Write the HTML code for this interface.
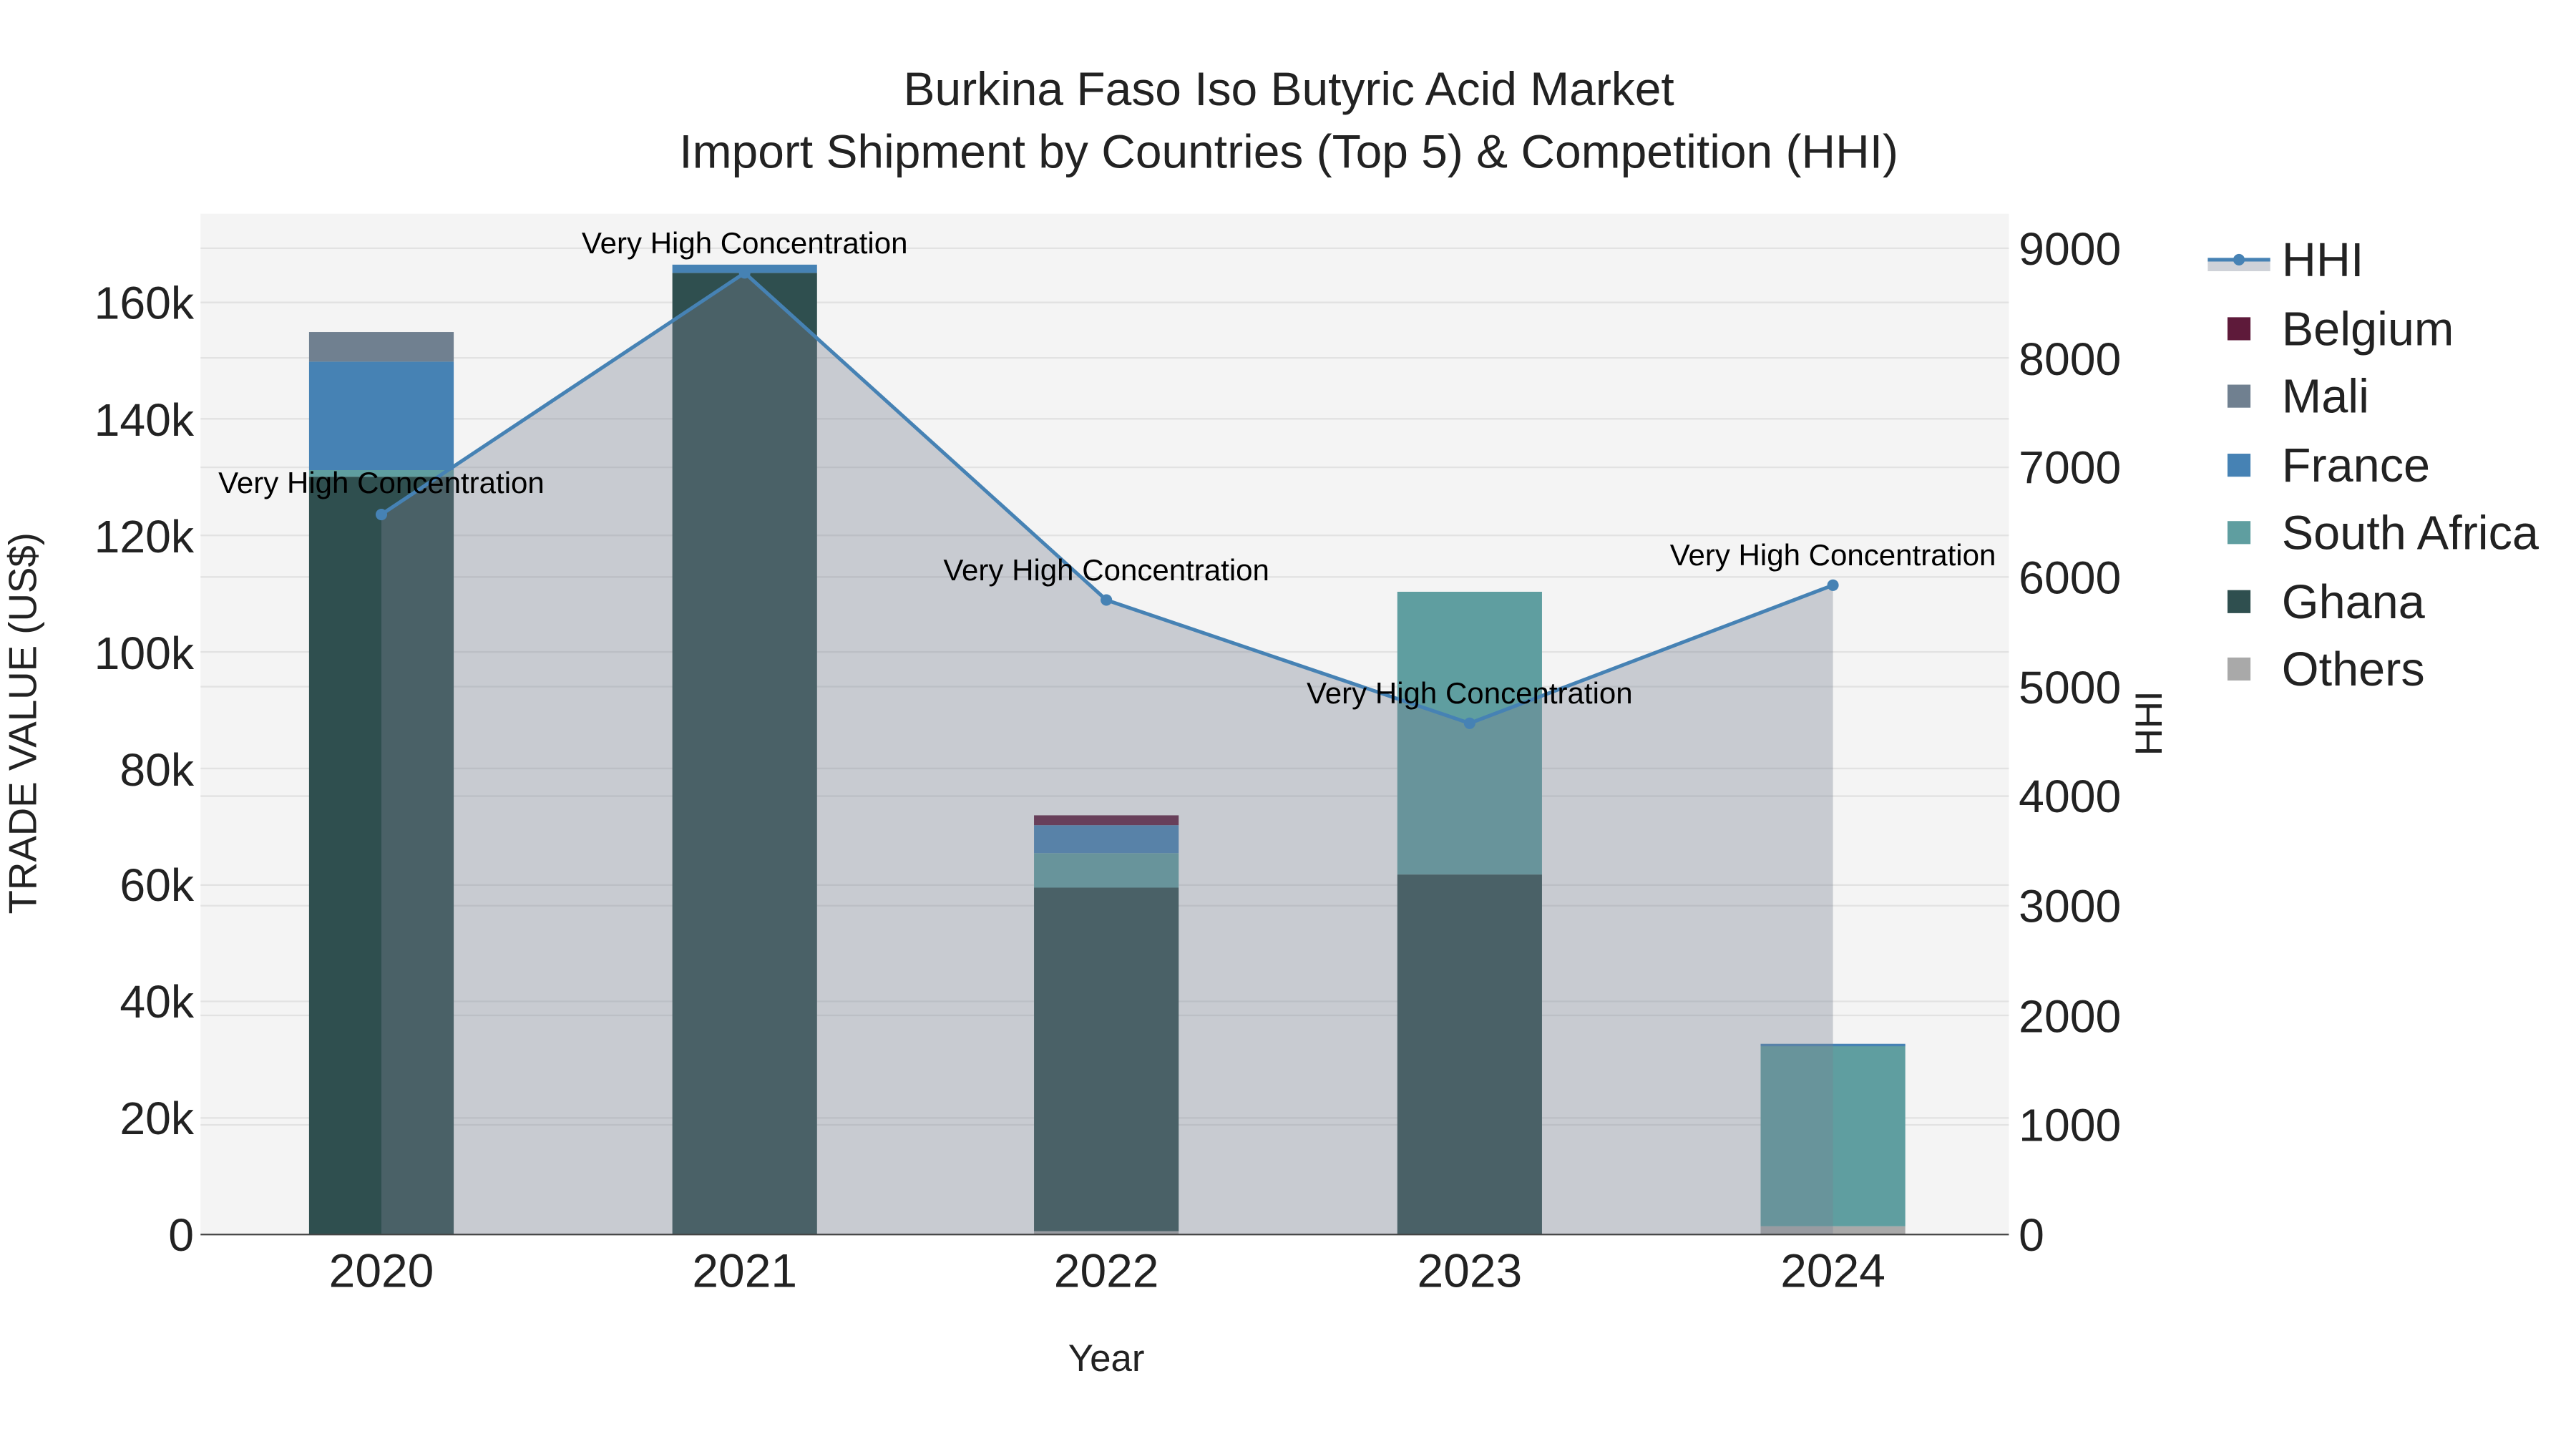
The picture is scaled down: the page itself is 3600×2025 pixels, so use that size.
<!DOCTYPE html>
<html><head><meta charset="utf-8"><style>html,body{margin:0;padding:0;background:#fff}svg{display:block}text{font-family:"Liberation Sans",Arial,sans-serif}</style></head>
<body>
<svg width="3600" height="2025" viewBox="0 0 1567 881.5" preserveAspectRatio="none" xmlns="http://www.w3.org/2000/svg">
<rect x="0" y="0" width="1567" height="882" fill="#fff"/>
<rect x="122" y="130" width="1100" height="621" fill="#f4f4f4"/>
<g stroke="#e2e2e2" stroke-width="1">
<line x1="122" x2="1222" y1="684.3" y2="684.3"/><line x1="122" x2="1222" y1="617.7" y2="617.7"/><line x1="122" x2="1222" y1="551" y2="551"/><line x1="122" x2="1222" y1="484.3" y2="484.3"/><line x1="122" x2="1222" y1="417.7" y2="417.7"/><line x1="122" x2="1222" y1="351" y2="351"/><line x1="122" x2="1222" y1="284.3" y2="284.3"/><line x1="122" x2="1222" y1="217.7" y2="217.7"/><line x1="122" x2="1222" y1="151" y2="151"/>
<line x1="122" x2="1222" y1="680.1" y2="680.1"/><line x1="122" x2="1222" y1="609.2" y2="609.2"/><line x1="122" x2="1222" y1="538.4" y2="538.4"/><line x1="122" x2="1222" y1="467.5" y2="467.5"/><line x1="122" x2="1222" y1="396.6" y2="396.6"/><line x1="122" x2="1222" y1="325.7" y2="325.7"/><line x1="122" x2="1222" y1="254.8" y2="254.8"/><line x1="122" x2="1222" y1="184" y2="184"/>
</g>
<rect x="188" y="290" width="88" height="461" fill="#2f4f4f"/>
<rect x="188" y="286" width="88" height="4" fill="#5f9ea0"/>
<rect x="188" y="220" width="88" height="66" fill="#4682b4"/>
<rect x="188" y="202" width="88" height="18" fill="#708090"/>
<rect x="409" y="166" width="88" height="585" fill="#2f4f4f"/>
<rect x="409" y="161" width="88" height="5" fill="#4682b4"/>
<rect x="629" y="749" width="88" height="2" fill="#a9a9a9"/>
<rect x="629" y="540" width="88" height="209" fill="#2f4f4f"/>
<rect x="629" y="519" width="88" height="21" fill="#5f9ea0"/>
<rect x="629" y="502" width="88" height="17" fill="#4682b4"/>
<rect x="629" y="496" width="88" height="6" fill="#5e1a3a"/>
<rect x="850" y="532" width="88" height="219" fill="#2f4f4f"/>
<rect x="850" y="360" width="88" height="172" fill="#5f9ea0"/>
<rect x="1071" y="746" width="88" height="5" fill="#a9a9a9"/>
<rect x="1071" y="636" width="88" height="110" fill="#5f9ea0"/>
<rect x="1071" y="635" width="88" height="1.5" fill="#4682b4"/>
<polygon points="232,751 232,313 453,166 673,365 894,440 1115,356 1115,751" fill="rgb(122,131,148)" fill-opacity="0.36"/>
<polyline points="232,313 453,166 673,365 894,440 1115,356" fill="none" stroke="#4682b4" stroke-width="2.2"/>
<g fill="#4682b4"><circle cx="232" cy="313" r="3.5"/><circle cx="453" cy="166" r="3.5"/><circle cx="673" cy="365" r="3.5"/><circle cx="894" cy="440" r="3.5"/><circle cx="1115" cy="356" r="3.5"/></g>
<line x1="122" x2="1222" y1="751" y2="751" stroke="#444" stroke-width="1"/>
<g font-size="18.3" text-anchor="middle" fill="#000">
<text x="232" y="300">Very High Concentration</text>
<text x="453" y="154">Very High Concentration</text>
<text x="673" y="353">Very High Concentration</text>
<text x="894" y="428">Very High Concentration</text>
<text x="1115" y="344">Very High Concentration</text>
</g>
<g font-size="28" fill="#222" text-anchor="end">
<text x="118" y="761">0</text><text x="118" y="690">20k</text><text x="118" y="619">40k</text><text x="118" y="548">60k</text><text x="118" y="478">80k</text><text x="118" y="407">100k</text><text x="118" y="336">120k</text><text x="118" y="265">140k</text><text x="118" y="194">160k</text>
</g>
<g font-size="28" fill="#222" text-anchor="start">
<text x="1228" y="761">0</text><text x="1228" y="694">1000</text><text x="1228" y="628">2000</text><text x="1228" y="561">3000</text><text x="1228" y="494">4000</text><text x="1228" y="428">5000</text><text x="1228" y="361">6000</text><text x="1228" y="294">7000</text><text x="1228" y="228">8000</text><text x="1228" y="161">9000</text>
</g>
<g font-size="28.7" fill="#222" text-anchor="middle">
<text x="232" y="783">2020</text><text x="453" y="783">2021</text><text x="673" y="783">2022</text><text x="894" y="783">2023</text><text x="1115" y="783">2024</text>
</g>
<text x="673" y="834" font-size="23" text-anchor="middle" fill="#222">Year</text>
<text transform="translate(22,440) rotate(-90)" font-size="23.8" text-anchor="middle" fill="#222">TRADE VALUE (US$)</text>
<text transform="translate(1315,440) rotate(-90)" font-size="23" text-anchor="middle" fill="#222">HHI</text>
<text x="784" y="64" font-size="28.7" text-anchor="middle" fill="#222">Burkina Faso Iso Butyric Acid Market</text>
<text x="784" y="102" font-size="28.7" text-anchor="middle" fill="#222">Import Shipment by Countries (Top 5) &amp; Competition (HHI)</text>
<rect x="1343" y="158" width="38" height="7" fill="rgb(122,131,148)" fill-opacity="0.36"/>
<line x1="1343" x2="1381" y1="158" y2="158" stroke="#4682b4" stroke-width="2.2"/>
<circle cx="1362" cy="158" r="3.5" fill="#4682b4"/>
<rect x="1355" y="193" width="14" height="14" fill="#5e1a3a"/>
<rect x="1355" y="234" width="14" height="14" fill="#708090"/>
<rect x="1355" y="276" width="14" height="14" fill="#4682b4"/>
<rect x="1355" y="317" width="14" height="14" fill="#5f9ea0"/>
<rect x="1355" y="359" width="14" height="14" fill="#2f4f4f"/>
<rect x="1355" y="400" width="14" height="14" fill="#a9a9a9"/>
<g font-size="29" fill="#222">
<text x="1388" y="168">HHI</text><text x="1388" y="210">Belgium</text><text x="1388" y="251">Mali</text><text x="1388" y="293">France</text><text x="1388" y="334">South Africa</text><text x="1388" y="376">Ghana</text><text x="1388" y="417">Others</text>
</g>
</svg>
</body></html>
